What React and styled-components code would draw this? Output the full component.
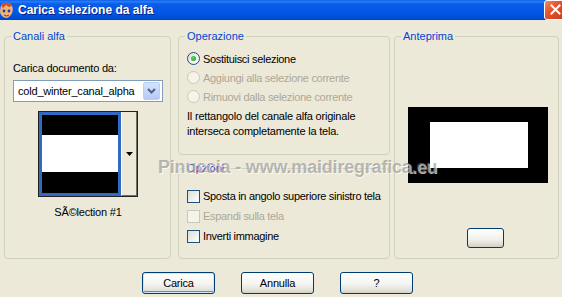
import React from 'react'
import styled, { createGlobalStyle } from 'styled-components'

const GlobalStyle = createGlobalStyle`
  html, body {
    margin: 0;
    padding: 0;
    background: #ECE9D8;
  }
  body {
    font-family: "Liberation Sans", Arial, sans-serif;
    font-size: 11px;
    color: #000;
  }
`;

const Window = styled.div`
  position: relative;
  width: 562px;
  height: 297px;
  overflow: hidden;
  background: #ECE9D8;
`;

const TitleBar = styled.div`
  height: 20px;
  display: flex;
  align-items: center;
  background: linear-gradient(#0B60EA 0%, #2A7CF2 8%, #0A5DE8 20%, #0055E3 70%, #004BD6 92%, #003FB8 100%);
`;

const TitleIcon = styled.svg`
  width: 15px;
  height: 17px;
  margin-left: -1px;
  flex: none;
`;

const TitleText = styled.div`
  margin-left: 4px;
  color: #fff;
  font-weight: bold;
  font-size: 12px;
  text-shadow: 1px 1px 0 #0A1F8A;
`;

const CloseBtn = styled.div`
  margin-left: auto;
  margin-right: -4px;
  width: 20px;
  height: 18px;
  margin-top: -1px;
  border: 1px solid #fff;
  border-radius: 3px;
  background: linear-gradient(135deg, #F08A6A 0%, #E2532F 40%, #C83A18 100%);
  display: flex;
  align-items: center;
  justify-content: center;
`;

const Body = styled.div`
  padding: 10px 0 0 4px;
`;

const Panels = styled.div`
  display: flex;
  align-items: flex-start;
`;

const Column = styled.div`
  display: flex;
  flex-direction: column;
  gap: ${p => p.$gap || 0}px;
  margin-left: ${p => p.$ml || 0}px;
`;

const Group = styled.fieldset`
  box-sizing: border-box;
  margin: 0;
  padding: 0;
  min-width: 0;
  width: ${p => p.$w}px;
  height: ${p => p.$h}px;
  border: 1px solid #D0D0BF;
  border-radius: 4px;
`;

const Legend = styled.legend`
  margin-left: 6px;
  padding: 0 2px;
  line-height: 13px;
  color: #0046D5;
`;

const LeftInner = styled.div`
  display: flex;
  flex-direction: column;
  padding: 19px 7px 0 8px;
`;

const Label = styled.div`
  line-height: 13px;
  letter-spacing: -0.2px;
`;

const Select = styled.div`
  box-sizing: border-box;
  margin-top: 5px;
  height: 22px;
  display: flex;
  align-items: center;
  padding: 0 2px 0 4px;
  background: #fff;
  border: 1px solid #7F9DB9;
  letter-spacing: -0.2px;
  white-space: nowrap;
`;

const SelectBtn = styled.div`
  margin-left: auto;
  width: 15px;
  height: 16px;
  border: 1px solid #B9CEF9;
  border-radius: 2px;
  background: linear-gradient(#D6E3FD, #B5C9F6);
  display: flex;
  align-items: center;
  justify-content: center;
`;

const Thumb = styled.div`
  box-sizing: border-box;
  margin-top: 9px;
  align-self: center;
  width: 100px;
  height: 86px;
  display: flex;
  border: 1px solid #222;
`;

const ThumbFrame = styled.div`
  width: 76px;
  border: 3px solid #316AC5;
  display: flex;
  flex-direction: column;
`;

const Band = styled.div`
  height: ${p => p.$h}px;
  background: ${p => p.$c};
`;

const ThumbBtn = styled.div`
  box-sizing: border-box;
  flex: 1;
  border-left: 1px solid #fff;
  border-right: 1px solid #716F64;
  border-bottom: 1px solid #716F64;
  display: flex;
  align-items: center;
  justify-content: center;
`;

const Caption = styled.div`
  margin-top: 9px;
  align-self: center;
  line-height: 13px;
  letter-spacing: -0.2px;
`;

const OptList = styled.div`
  display: flex;
  flex-direction: column;
  padding: ${p => p.$pt}px 0 0 8px;
`;

const OptRow = styled.div`
  height: ${p => p.$h || 19}px;
  display: flex;
  align-items: center;
  gap: 3px;
  white-space: nowrap;
  letter-spacing: -0.3px;
  color: ${p => (p.$disabled ? '#ACA899' : '#000')};
`;

const Radio = styled.span`
  box-sizing: border-box;
  flex: none;
  width: 13px;
  height: 13px;
  border-radius: 50%;
  border: 1px solid ${p => (p.$disabled ? '#CAC8BB' : '#1C5180')};
  background: ${p => (p.$disabled ? '#F5F4EA' : 'linear-gradient(135deg, #DCDCD7, #fff)')};
  display: flex;
  align-items: center;
  justify-content: center;
  &::after {
    content: '';
    display: ${p => (p.$checked ? 'block' : 'none')};
    width: 5px;
    height: 5px;
    border-radius: 50%;
    background: radial-gradient(circle at 40% 40%, #5FD35F, #1A9A1A);
  }
`;

const Check = styled.span`
  box-sizing: border-box;
  flex: none;
  width: 13px;
  height: 13px;
  border: 1px solid ${p => (p.$disabled ? '#CAC8BB' : '#1C5180')};
  background: ${p => (p.$disabled ? '#F5F4EA' : 'linear-gradient(135deg, #DCDCD7, #fff)')};
`;

const Note = styled.div`
  margin-top: 3px;
  line-height: 15px;
  letter-spacing: -0.2px;
`;

const PreviewInner = styled.div`
  display: flex;
  flex-direction: column;
  align-items: flex-start;
  padding: 64px 0 0 13px;
`;

const PreviewBox = styled.div`
  width: 140px;
  height: 76px;
  background: #000;
  display: flex;
  align-items: center;
  justify-content: center;
`;

const PreviewWhite = styled.div`
  width: 98px;
  height: 46px;
  margin-left: 2px;
  background: #fff;
`;

const SmallBtn = styled.div`
  box-sizing: border-box;
  margin: 45px 0 0 59px;
  width: 37px;
  height: 20px;
  border: 1px solid #003C74;
  border-radius: 3px;
  background: linear-gradient(#FFFFFF, #F0F0EA 60%, #D6D0C5);
`;

const ButtonRow = styled.div`
  display: flex;
  gap: 26px;
  padding: 13px 0 0 138px;
`;

const Button = styled.div`
  box-sizing: border-box;
  width: 73px;
  height: 22px;
  display: flex;
  align-items: center;
  justify-content: center;
  border: 1px solid #003C74;
  border-radius: 3px;
  background: linear-gradient(#FFFFFF, #F4F4F0 55%, #E3E2DA 85%, #D6D0C5);
  box-shadow: ${p => (p.$default ? 'inset 0 0 0 1px #CEE7FF, inset 0 -1px 0 1px #6982EE' : 'none')};
  letter-spacing: -0.2px;
`;

const Watermark = styled.div`
  position: absolute;
  left: 158px;
  top: 157px;
  font-family: "Liberation Sans", Arial, sans-serif;
  font-weight: bold;
  font-size: 18px;
  letter-spacing: -0.2px;
  color: rgba(140, 140, 140, 0.6);
  text-shadow: 1px 1px 0 rgba(255, 255, 255, 0.7);
  white-space: nowrap;
  pointer-events: none;
`;

function App() {
  return (
    <Window>
      <GlobalStyle />
      <TitleBar>
        <TitleIcon viewBox="0 0 15 17">
          <path d="M2 3 C5 0 11 0 13 4 C15 8 13 14 8 16 C4 16 1 13 1 9 Z" fill="#F2B27A" />
          <path d="M2 3 C5 0 11 0 13 4 L10 5 L7 3 L4 6 Z" fill="#C8502A" />
          <circle cx="5" cy="9" r="1.4" fill="#1E3FA0" />
          <circle cx="10" cy="9" r="1.4" fill="#1E3FA0" />
          <path d="M5 13 Q7.5 15 10 13" stroke="#A0301A" strokeWidth="1" fill="none" />
        </TitleIcon>
        <TitleText>Carica selezione da alfa</TitleText>
        <CloseBtn>
          <svg width="11" height="11" viewBox="0 0 11 11">
            <path d="M1.5 1.5 L9.5 9.5 M9.5 1.5 L1.5 9.5" stroke="#fff" strokeWidth="2" strokeLinecap="square" />
          </svg>
        </CloseBtn>
      </TitleBar>

      <Body>
        <Panels>
          <Group $w={167} $h={229}>
            <Legend>Canali alfa</Legend>
            <LeftInner>
              <Label>Carica documento da:</Label>
              <Select>
                cold_winter_canal_alpha
                <SelectBtn>
                  <svg width="9" height="6" viewBox="0 0 9 6">
                    <path d="M1 1 L4.5 4.5 L8 1" stroke="#4D6185" strokeWidth="2" fill="none" />
                  </svg>
                </SelectBtn>
              </Select>
              <Thumb>
                <ThumbFrame>
                  <Band $h={20} $c="#000" />
                  <Band $h={37} $c="#fff" />
                  <Band $h={21} $c="#000" />
                </ThumbFrame>
                <ThumbBtn>
                  <svg width="7" height="4" viewBox="0 0 7 4">
                    <path d="M0 0 H7 L3.5 4 Z" fill="#000" />
                  </svg>
                </ThumbBtn>
              </Thumb>
              <Caption>SÃ©lection #1</Caption>
            </LeftInner>
          </Group>

          <Column $ml={7} $gap={7}>
            <Group $w={212} $h={125}>
              <Legend>Operazione</Legend>
              <OptList $pt={6}>
                <OptRow>
                  <Radio $checked />
                  Sostituisci selezione
                </OptRow>
                <OptRow $disabled>
                  <Radio $disabled />
                  Aggiungi alla selezione corrente
                </OptRow>
                <OptRow $disabled>
                  <Radio $disabled />
                  Rimuovi dalla selezione corrente
                </OptRow>
                <Note>
                  Il rettangolo del canale alfa originale
                  <br />
                  interseca completamente la tela.
                </Note>
              </OptList>
            </Group>
            <Group $w={212} $h={97}>
              <Legend>Opzioni</Legend>
              <OptList $pt={11}>
                <OptRow $h={20}>
                  <Check />
                  Sposta in angolo superiore sinistro tela
                </OptRow>
                <OptRow $h={20} $disabled>
                  <Check $disabled />
                  Espandi sulla tela
                </OptRow>
                <OptRow $h={20}>
                  <Check />
                  Inverti immagine
                </OptRow>
              </OptList>
            </Group>
          </Column>

          <Column $ml={4}>
            <Group $w={165} $h={229}>
              <Legend>Anteprima</Legend>
              <PreviewInner>
                <PreviewBox>
                  <PreviewWhite />
                </PreviewBox>
                <SmallBtn />
              </PreviewInner>
            </Group>
          </Column>
        </Panels>

        <ButtonRow>
          <Button $default>Carica</Button>
          <Button>Annulla</Button>
          <Button>?</Button>
        </ButtonRow>
      </Body>

      <Watermark>Pinuccia - www.maidiregrafica.eu</Watermark>
    </Window>
  );
}

export default App
